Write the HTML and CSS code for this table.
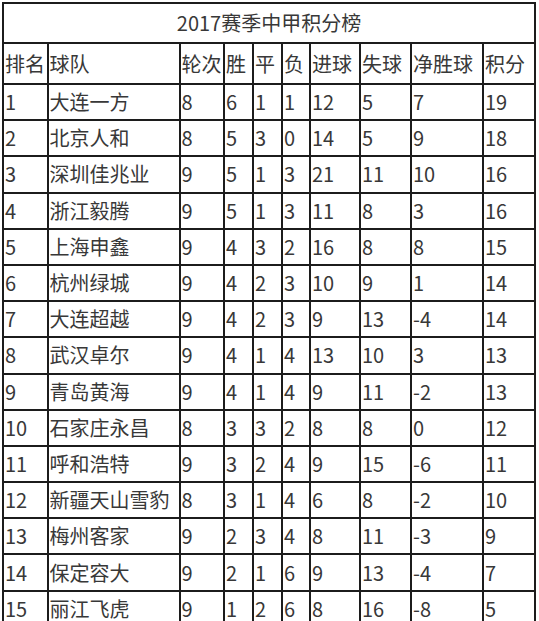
FILE: index.html
```html
<!DOCTYPE html>
<html lang="zh">
<head>
<meta charset="utf-8">
<link rel="stylesheet" href="styles.css">
</head>
<body>
<div class="wrap">
<table class="standings">
<colgroup>
<col class="c-rank"><col class="c-team"><col class="c-round"><col class="c-w"><col class="c-d"><col class="c-l"><col class="c-gf"><col class="c-ga"><col class="c-gd"><col class="c-pts">
</colgroup>
<tr class="title-row"><td colspan="10" class="title">2017赛季中甲积分榜</td></tr>
<tr class="head-row"><td>排名</td><td>球队</td><td>轮次</td><td>胜</td><td>平</td><td>负</td><td>进球</td><td>失球</td><td>净胜球</td><td>积分</td></tr>
<tr><td>1</td><td>大连一方</td><td>8</td><td>6</td><td>1</td><td>1</td><td>12</td><td>5</td><td>7</td><td>19</td></tr>
<tr><td>2</td><td>北京人和</td><td>8</td><td>5</td><td>3</td><td>0</td><td>14</td><td>5</td><td>9</td><td>18</td></tr>
<tr><td>3</td><td>深圳佳兆业</td><td>9</td><td>5</td><td>1</td><td>3</td><td>21</td><td>11</td><td>10</td><td>16</td></tr>
<tr><td>4</td><td>浙江毅腾</td><td>9</td><td>5</td><td>1</td><td>3</td><td>11</td><td>8</td><td>3</td><td>16</td></tr>
<tr><td>5</td><td>上海申鑫</td><td>9</td><td>4</td><td>3</td><td>2</td><td>16</td><td>8</td><td>8</td><td>15</td></tr>
<tr><td>6</td><td>杭州绿城</td><td>9</td><td>4</td><td>2</td><td>3</td><td>10</td><td>9</td><td>1</td><td>14</td></tr>
<tr><td>7</td><td>大连超越</td><td>9</td><td>4</td><td>2</td><td>3</td><td>9</td><td>13</td><td>-4</td><td>14</td></tr>
<tr><td>8</td><td>武汉卓尔</td><td>9</td><td>4</td><td>1</td><td>4</td><td>13</td><td>10</td><td>3</td><td>13</td></tr>
<tr><td>9</td><td>青岛黄海</td><td>9</td><td>4</td><td>1</td><td>4</td><td>9</td><td>11</td><td>-2</td><td>13</td></tr>
<tr><td>10</td><td>石家庄永昌</td><td>8</td><td>3</td><td>3</td><td>2</td><td>8</td><td>8</td><td>0</td><td>12</td></tr>
<tr><td>11</td><td>呼和浩特</td><td>9</td><td>3</td><td>2</td><td>4</td><td>9</td><td>15</td><td>-6</td><td>11</td></tr>
<tr><td>12</td><td>新疆天山雪豹</td><td>8</td><td>3</td><td>1</td><td>4</td><td>6</td><td>8</td><td>-2</td><td>10</td></tr>
<tr><td>13</td><td>梅州客家</td><td>9</td><td>2</td><td>3</td><td>4</td><td>8</td><td>11</td><td>-3</td><td>9</td></tr>
<tr><td>14</td><td>保定容大</td><td>9</td><td>2</td><td>1</td><td>6</td><td>9</td><td>13</td><td>-4</td><td>7</td></tr>
<tr><td>15</td><td>丽江飞虎</td><td>9</td><td>1</td><td>2</td><td>6</td><td>8</td><td>16</td><td>-8</td><td>5</td></tr>
</table>
</div>
</body>
</html>
```
FILE: styles.css
```css
html, body {
  margin: 0;
  padding: 0;
  background: #fff;
  overflow: hidden;
}
.wrap {
  padding: 2px 0 0 2px;
}
.standings {
  border-collapse: collapse;
  table-layout: fixed;
  width: 534px;
  font-family: "Noto Sans CJK SC", "Noto Sans", sans-serif;
  font-size: 20px;
  color: #383838;
}
.standings td {
  border: 2px solid #1c1c1c;
  padding: 0 0 0 1px;
  white-space: nowrap;
  overflow: hidden;
  vertical-align: middle;
  line-height: 1;
}
.c-rank { width: 44.5px; }
.c-team { width: 132px; }
.c-round { width: 44.5px; }
.c-w { width: 29px; }
.c-d { width: 29px; }
.c-l { width: 28px; }
.c-gf { width: 50px; }
.c-ga { width: 51px; }
.c-gd { width: 72px; }
.c-pts { width: 52px; }
.standings tr { height: 36.2px; }
.standings .title-row { height: 40px; }
.standings .head-row { height: 41px; }
.standings .title {
  text-align: center;
  padding: 0;
}
```
